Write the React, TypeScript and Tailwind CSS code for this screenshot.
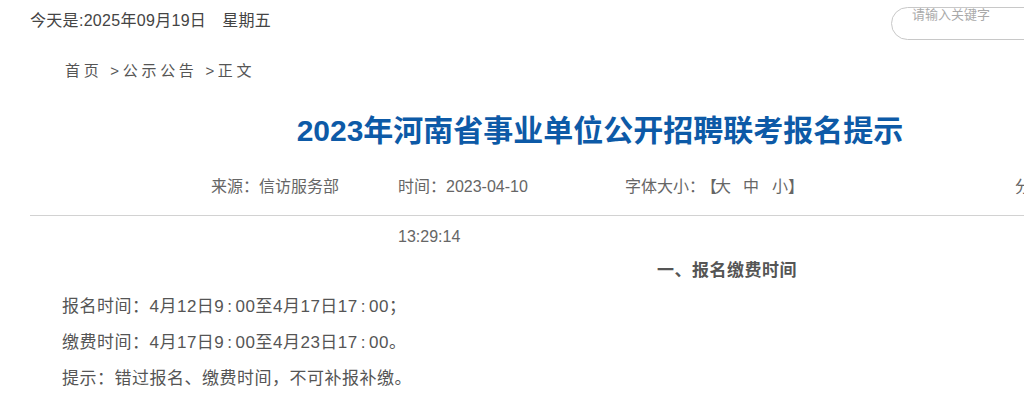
const Colon = () => <span className="mx-[3px]">:</span>

export default function App() {
  return (
    <div className="w-full min-h-[400px] overflow-hidden bg-white font-['Liberation_Sans','Noto_Sans_CJK_SC',sans-serif] text-[#555]">
      <div className="ml-[30px] w-[1140px]">
        {/* Top bar */}
        <div className="flex h-[47px] items-start justify-between">
          <div className="pt-[10px] text-[16px] leading-[22px] tracking-[0.3px] text-[#444]">
            今天是:2025年09月19日<span className="ml-[16px]">星期五</span>
          </div>
          <div className="mt-[7px] mr-[29px] h-[33px] w-[250px] rounded-full border border-[#c8c8c8] pl-[20px] text-[13px] leading-[13px] text-[#aaa]">
            请输入关键字
          </div>
        </div>

        {/* Breadcrumb */}
        <div className="mt-[13px] pl-[35px] text-[15px] leading-[22px] tracking-[3.7px] text-[#555]">
          首页 &gt;公示公告 &gt;正文
        </div>

        {/* Title */}
        <h1 className="mt-[29px] text-center text-[30px] font-bold leading-[40px] text-[#0d5aa7]">
          2023年河南省事业单位公开招聘联考报名提示
        </h1>

        {/* Meta row */}
        <div className="mt-[11px] flex h-[54px] border-b border-[#d2d2d2] pl-[181px] text-[16px] leading-[50px] text-[#666]">
          <div className="w-[187px] shrink-0">来源：信访服务部</div>
          <div className="mr-[77px] w-[150px] shrink-0">时间：2023-04-10 13:29:14</div>
          <div className="flex w-[390px] shrink-0">
            <span>字体大小：</span>
            <span className="-ml-[4px] -mr-[2px]">【</span>
            <span>大</span>
            <span className="ml-[12px]">中</span>
            <span className="ml-[13px]">小</span>
            <span>】</span>
          </div>
          <div className="shrink-0">分享</div>
        </div>

        {/* Content */}
        <div className="mt-[37px] text-[17px] leading-[36px] tracking-[0.5px] text-[#555]">
          <p className="ml-[627px] font-bold">一、报名缴费时间</p>
          <p className="pl-[32px]">
            报名时间：4月12日9<Colon />00至4月17日17<Colon />00；
          </p>
          <p className="pl-[32px]">
            缴费时间：4月17日9<Colon />00至4月23日17<Colon />00。
          </p>
          <p className="pl-[32px]">提示：错过报名、缴费时间，不可补报补缴。</p>
        </div>
      </div>
    </div>
  )
}
